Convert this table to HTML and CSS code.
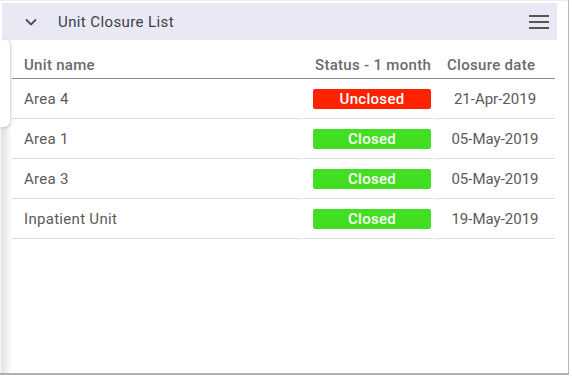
FILE: index.html
```html
<!DOCTYPE html>
<html>
<head>
<meta charset="utf-8">
<link rel="stylesheet" href="styles.css">
</head>
<body>
<div class="widget">
  <div class="header">
    <svg class="chev" width="14" height="10" viewBox="0 0 14 10"><path d="M2 2.5 L7 7.5 L12 2.5" fill="none" stroke="#4a4a5a" stroke-width="1.8"/></svg>
    <span class="title">Unit Closure List</span>
    <svg class="menu" width="20" height="16" viewBox="0 0 20 16"><rect x="0" y="1" width="20" height="2" fill="#555"/><rect x="0" y="7" width="20" height="2" fill="#555"/><rect x="0" y="13" width="20" height="2" fill="#555"/></svg>
  </div>
  <div class="content">
    <div class="strip"><div class="tab"></div></div>
    <div class="main">
      <div class="thead">
        <div class="c1">Unit name</div>
        <div class="c2">Status - 1 month</div>
        <div class="c3 left">Closure date</div>
      </div>
      <div class="row">
        <div class="c1">Area 4</div>
        <div class="c2"><span class="badge red">Unclosed</span></div>
        <div class="c3">21-Apr-2019</div>
      </div>
      <div class="row">
        <div class="c1">Area 1</div>
        <div class="c2"><span class="badge green">Closed</span></div>
        <div class="c3">05-May-2019</div>
      </div>
      <div class="row">
        <div class="c1">Area 3</div>
        <div class="c2"><span class="badge green">Closed</span></div>
        <div class="c3">05-May-2019</div>
      </div>
      <div class="row">
        <div class="c1">Inpatient Unit</div>
        <div class="c2"><span class="badge green">Closed</span></div>
        <div class="c3">19-May-2019</div>
      </div>
    </div>
  </div>
</div>
</body>
</html>
```
FILE: styles.css
```css
html, body { margin: 0; padding: 0; background: #fff; }
body { font-family: Roboto, "Liberation Sans", sans-serif; }
.widget {
  width: 569px;
  height: 375px;
  box-sizing: border-box;
  border-top: 1px solid #eeeeee;
  border-right: 1px solid #b5b5b5;
  border-bottom: 2px solid #b0b0b0;
  padding-top: 2px;
  display: flex;
  flex-direction: column;
  overflow: hidden;
}
.header {
  margin: 0 11px 0 2px;
  height: 37px;
  background: #e8e9f5;
  display: flex;
  align-items: center;
  flex-shrink: 0;
}
.chev { margin-left: 22px; margin-top: 1px; }
.title {
  margin-left: 20px;
  font-size: 15px;
  letter-spacing: 0.4px;
  color: #3e3e4c;
  flex: 1;
  padding-top: 1px;
}
.menu { margin-right: 8px; }
.content { flex: 1; display: flex; position: relative; }
.strip {
  width: 12px;
  flex-shrink: 0;
  background: linear-gradient(to right, #fafafa 0, #e2e2e2 2px, #f0f0f0 7px, #ffffff 12px);
  position: relative;
}
.tab {
  position: absolute;
  left: 0; top: 0;
  width: 10px;
  height: 87px;
  background: #fff;
  border-radius: 0 5px 6px 0;
  box-shadow: 1px 1px 3px rgba(0,0,0,0.18);
}
.main { width: 543px; }
.thead, .row {
  display: grid;
  grid-template-columns: 289px 130px 120px;
  column-gap: 2px;
}
.thead {
  height: 38px;
  border-bottom: 1px solid #8a8a8a;
  font-size: 15px;
  letter-spacing: 0.3px;
  font-weight: 500;
  color: #6a6a6a;
  align-items: end;
}
.thead > div { padding-bottom: 4px; white-space: nowrap; }
.thead .c2 { padding-left: 12px; }
.c1 { padding-left: 12px; }
.c2 { padding-left: 10px; padding-right: 2px; }
.c3 { text-align: center; }
.thead .c3 { text-align: left; padding-left: 12px; }
.row > div {
  height: 39px;
  border-bottom: 1px solid #dcdcdc;
  display: flex;
  align-items: center;
  font-size: 15px;
  letter-spacing: 0.3px;
  color: #5a5a5a;
}
.row .c3 { justify-content: center; letter-spacing: 0; }
.badge {
  display: block;
  width: 100%;
  height: 20px;
  line-height: 20px;
  text-align: center;
  color: #fff;
  font-weight: 500;
  font-size: 15px;
  letter-spacing: 0.3px;
  border-radius: 2px;
}
.red { background: #ff2200; }
.green { background: #42de22; }
```
